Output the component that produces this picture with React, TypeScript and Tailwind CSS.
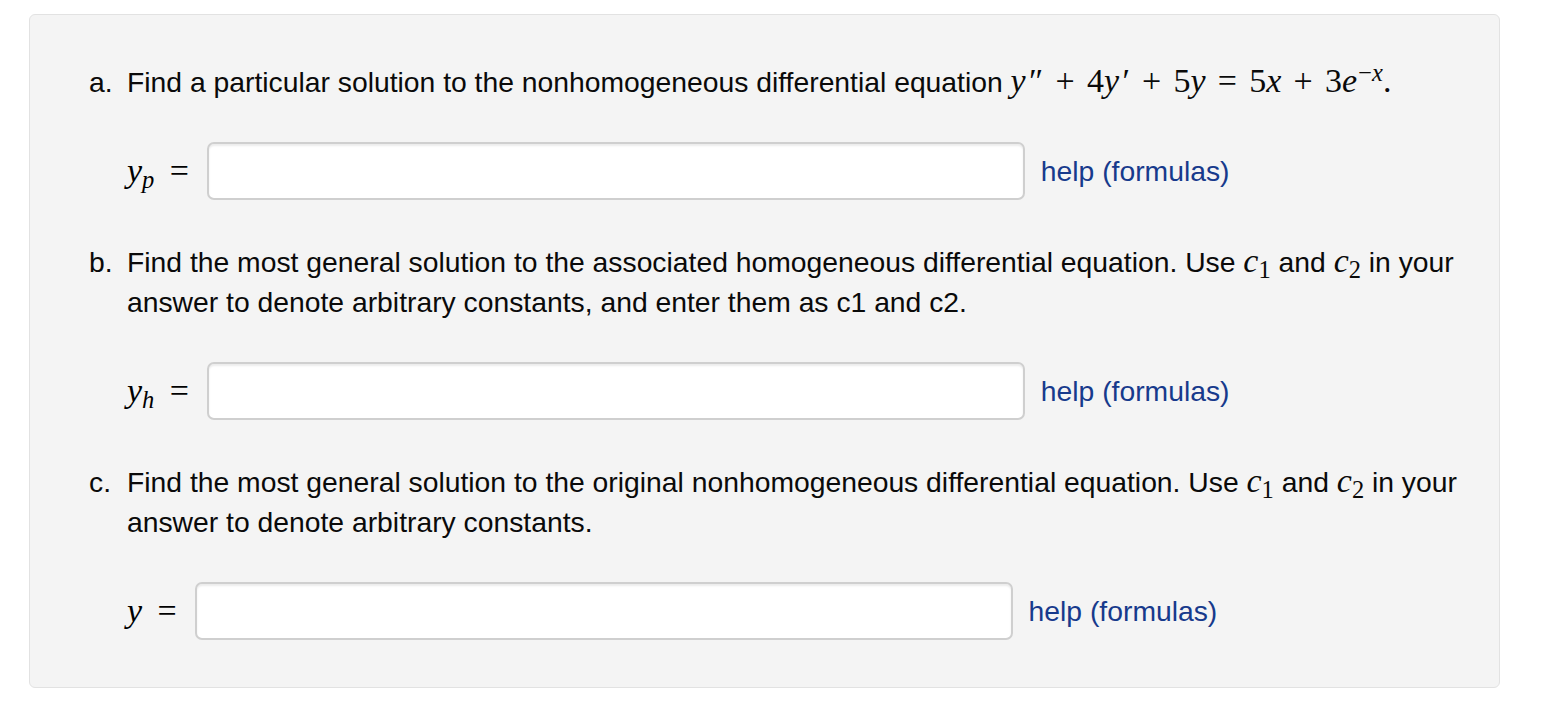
import React from 'react'

const mathFont = "font-['Liberation_Serif',serif] leading-none"

function V({ children }: { children: React.ReactNode }) {
  return <i className="italic">{children}</i>
}

function Op({ children }: { children: React.ReactNode }) {
  return <span className="mx-[0.36em] not-italic">{children}</span>
}

function Sub({ children }: { children: React.ReactNode }) {
  return <span className="relative top-[0.25em] text-[0.72em] leading-none">{children}</span>
}

function AnswerRow({ label }: { label: React.ReactNode }) {
  return (
    <div className="mt-[40px] flex items-center h-[58px]">
      <span className={`${mathFont} text-[34px] text-black`}>{label}</span>
      <div className="ml-[18px] w-[818px] h-[58px] rounded-[7px] border-2 border-[#cfcfcf] bg-white shadow-[inset_0_2px_2px_rgba(0,0,0,0.08)]" />
      <a className="ml-[16px] text-[#173a8c] cursor-pointer">help (formulas)</a>
    </div>
  )
}

function Part({ marker, children, label }: { marker: string; children: React.ReactNode; label: React.ReactNode }) {
  return (
    <div className="flex">
      <span className="w-[38px] shrink-0">{marker}</span>
      <div className="flex-1">
        <p>{children}</p>
        <AnswerRow label={label} />
      </div>
    </div>
  )
}

export default function App() {
  const c1 = (
    <span className={`${mathFont} text-[34px]`}>
      <V>c</V>
      <Sub>1</Sub>
    </span>
  )
  const c2 = (
    <span className={`${mathFont} text-[34px]`}>
      <V>c</V>
      <Sub>2</Sub>
    </span>
  )

  return (
    <div className="min-h-screen bg-white pt-[14px] pl-[29px]">
      <div className="w-[1471px] rounded-[6px] border border-[#e2e2e2] bg-[#f4f4f4] pt-[47px] pb-[47px] pl-[59px] pr-[30px] font-['Liberation_Sans',Arial,sans-serif] text-[28.3px] leading-[40px] text-[#0a0a0a]">
        <Part
          marker="a."
          label={
            <>
              <V>y</V>
              <Sub>
                <V>p</V>
              </Sub>
              <span className="ml-[0.45em]">=</span>
            </>
          }
        >
          Find a particular solution to the nonhomogeneous differential equation{' '}
          <span className={`${mathFont} text-[34px]`}>
            <V>y</V>
            <span className="ml-[0.1em]">″</span>
            <Op>+</Op>4<V>y</V>
            <span className="ml-[0.1em]">′</span>
            <Op>+</Op>5<V>y</V>
            <Op>=</Op>5<V>x</V>
            <Op>+</Op>3<V>e</V>
            <span className="relative -top-[0.45em] text-[0.72em] ml-[0.05em]">
              −<V>x</V>
            </span>
            .
          </span>
        </Part>

        <div className="mt-[42px]">
          <Part
            marker="b."
            label={
              <>
                <V>y</V>
                <Sub>
                  <V>h</V>
                </Sub>
                <span className="ml-[0.45em]">=</span>
              </>
            }
          >
            Find the most general solution to the associated homogeneous differential equation. Use {c1} and {c2} in your answer to denote arbitrary constants, and enter them as c1 and c2.
          </Part>
        </div>

        <div className="mt-[42px]">
          <Part
            marker="c."
            label={
              <>
                <V>y</V>
                <span className="ml-[0.45em]">=</span>
              </>
            }
          >
            Find the most general solution to the original nonhomogeneous differential equation. Use {c1} and {c2} in your answer to denote arbitrary constants.
          </Part>
        </div>
      </div>
    </div>
  )
}
